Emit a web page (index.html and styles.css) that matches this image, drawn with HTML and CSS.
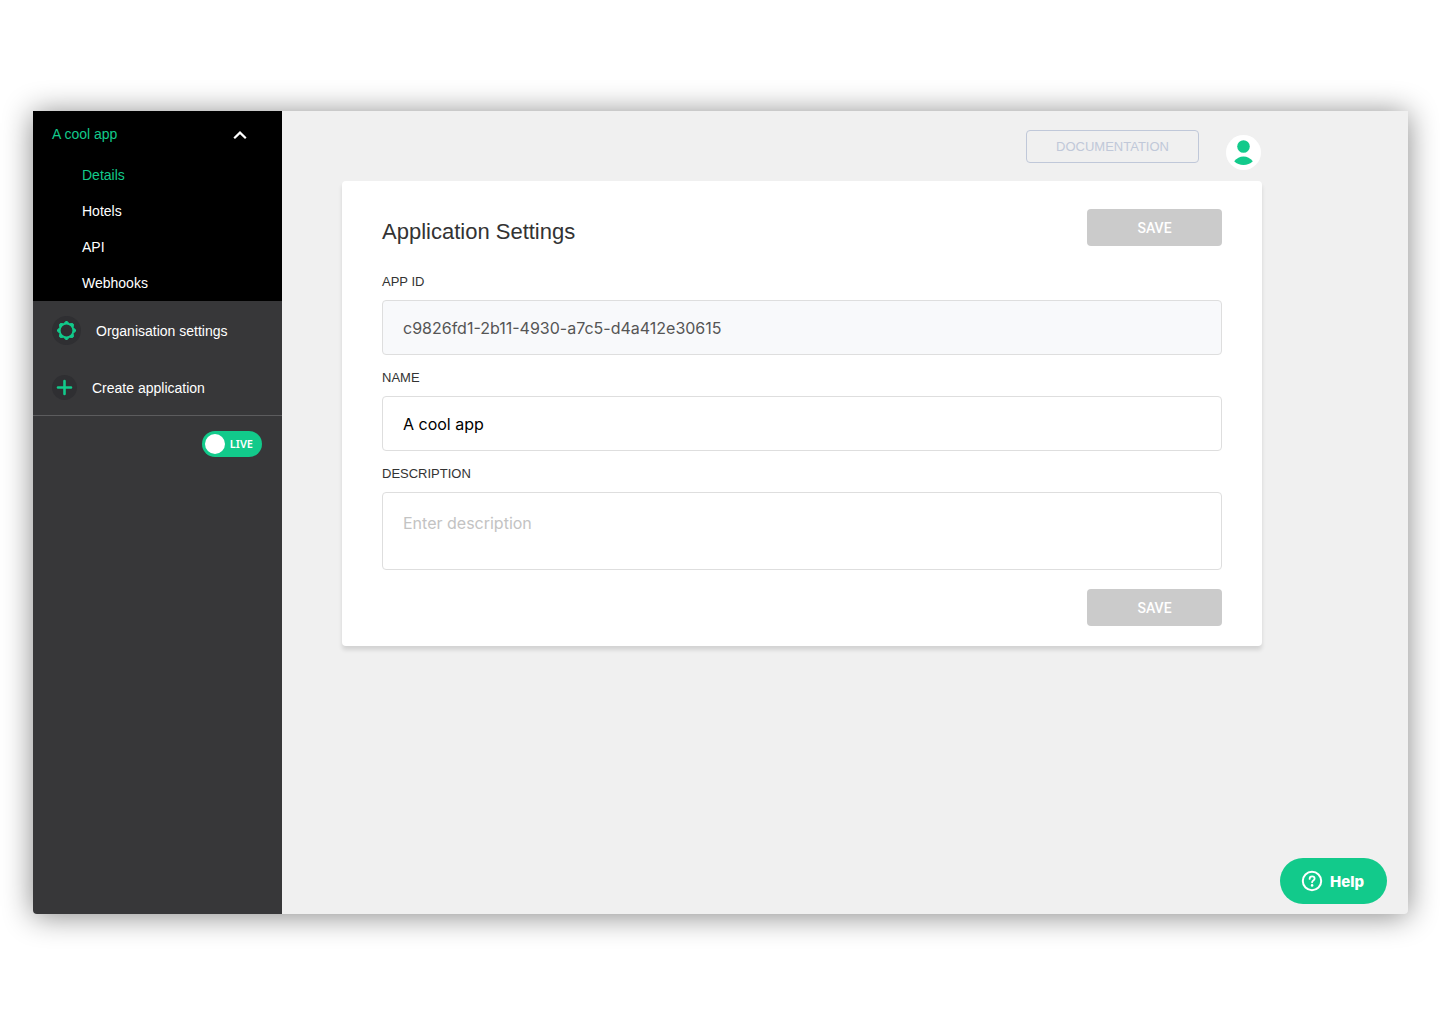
FILE: index.html
```html
<!DOCTYPE html>
<html lang="en">
<head>
    <meta charset="UTF-8">
    <meta name="viewport" content="width=device-width, initial-scale=1.0">
    <title>Application Settings</title>
    <link rel="stylesheet" href="styles.css">
</head>
<body>

<div class="window">
    <aside class="sidebar">
        <nav class="app-nav">
            <button type="button" class="app-toggle" aria-expanded="true">
                A cool app
                <svg width="14" height="12" viewBox="0 0 14 12" fill="none" stroke="#fff" stroke-width="2.2" stroke-linejoin="miter">
                    <path d="M1.2 10.2L7 4.6l5.8 5.6"/>
                </svg>
            </button>
            <a href="#details" class="active">Details</a>
            <a href="#hotels">Hotels</a>
            <a href="#api">API</a>
            <a href="#webhooks">Webhooks</a>
        </nav>
        <div class="org-nav">
            <a href="#organisation">
                <svg width="29" height="29" viewBox="0 0 29 29">
                    <circle cx="14.5" cy="14.5" r="14.5" fill="#2f2f32"/>
                    <circle cx="14.5" cy="14.5" r="6.8" fill="none" stroke="#12ca8b" stroke-width="1.8"/>
                    <g fill="#12ca8b" stroke="#12ca8b" stroke-width="1" stroke-linejoin="round">
                        <path id="tooth" d="M12.2 7.4l1.5-1.9h1.6l1.5 1.9z"/>
                        <use href="#tooth" transform="rotate(45 14.5 14.5)"/>
                        <use href="#tooth" transform="rotate(90 14.5 14.5)"/>
                        <use href="#tooth" transform="rotate(135 14.5 14.5)"/>
                        <use href="#tooth" transform="rotate(180 14.5 14.5)"/>
                        <use href="#tooth" transform="rotate(225 14.5 14.5)"/>
                        <use href="#tooth" transform="rotate(270 14.5 14.5)"/>
                        <use href="#tooth" transform="rotate(315 14.5 14.5)"/>
                    </g>
                </svg>
                Organisation settings
            </a>
            <a href="#create">
                <svg width="25" height="25" viewBox="0 0 25 25">
                    <circle cx="12.5" cy="12.5" r="12.5" fill="#2f2f32"/>
                    <path d="M12.5 6v13M6 12.5h13" stroke="#12ca8b" stroke-width="2.6" stroke-linecap="round"/>
                </svg>
                Create application
            </a>
        </div>
        <label class="live-switch">
            <input type="checkbox" checked>
            <span>LIVE</span>
        </label>
    </aside>

    <main class="main">
        <header class="topbar">
            <a href="#documentation" class="doc-btn">DOCUMENTATION</a>
            <button type="button" class="avatar" aria-label="Account">
                <svg width="35" height="35" viewBox="0 0 35 35" fill="#12ca8b">
                    <circle cx="17.5" cy="11.5" r="6.3"/>
                    <path d="M8.2 26.2Q12 21.4 17.5 21.4T26.8 26.2Q23 30 17.5 30T8.2 26.2z"/>
                </svg>
            </button>
        </header>

        <form class="card">
            <div class="card-header">
                <h1>Application Settings</h1>
                <button type="submit" class="save-btn" disabled>SAVE</button>
            </div>
            <label for="appId">APP ID</label>
            <input type="text" id="appId" value="c9826fd1-2b11-4930-a7c5-d4a412e30615" readonly>
            <label for="appName">NAME</label>
            <input type="text" id="appName" value="A cool app">
            <label for="appDescription">DESCRIPTION</label>
            <textarea id="appDescription" placeholder="Enter description"></textarea>
            <button type="submit" class="save-btn" disabled>SAVE</button>
        </form>
    </main>

    <button type="button" class="help-btn">
        <svg width="22" height="22" viewBox="0 0 22 22" fill="none" stroke="#fff" stroke-width="2" stroke-linecap="round">
            <circle cx="11" cy="11" r="9.2"/>
            <path d="M8.6 8.9c0-1.5 1-2.5 2.5-2.5s2.5 1 2.5 2.3c0 1.8-2.5 1.9-2.5 3.6" stroke-width="1.8"/>
            <circle cx="11.1" cy="15.4" r="1.3" fill="#fff" stroke="none"/>
        </svg>
        Help
    </button>
</div>

</body>
</html>
```

FILE: styles.css
```css
* {
    box-sizing: border-box;
}
body {
    font-family: "Liberation Sans", Arial, sans-serif;
    font-size: 14px;
    background-color: #fff;
    color: #333;
    margin: 0;
    padding: 111px 32px 110px 33px;
    min-height: 100vh;
    display: flex;
}
a {
    text-decoration: none;
}
button {
    font-family: inherit;
    border: none;
    padding: 0;
    cursor: pointer;
}
svg {
    display: block;
    flex-shrink: 0;
}
.window {
    position: relative;
    flex: 1;
    display: flex;
    background-color: #f0f0f0;
    border-radius: 0 0 4px 4px;
    box-shadow: 0 2px 30px rgba(0, 0, 0, 0.48);
}
.sidebar {
    width: 249px;
    background-color: #373739;
    border-radius: 0 0 0 4px;
    display: flex;
    flex-direction: column;
}
.app-nav {
    background-color: #000;
    display: flex;
    flex-direction: column;
}
.app-toggle {
    display: flex;
    justify-content: space-between;
    align-items: center;
    height: 46px;
    padding: 0 35px 0 19px;
    background: none;
    color: #12ca8b;
    font-size: 14px;
}
.app-nav a {
    line-height: 36px;
    padding-left: 49px;
    color: #fff;
}
.app-nav .active {
    color: #12ca8b;
}
.org-nav {
    border-bottom: 1px solid #5c5c5e;
}
.org-nav a {
    display: flex;
    align-items: center;
    gap: 15px;
    height: 57px;
    padding: 2px 0 0 19px;
    color: #fff;
}
.live-switch {
    align-self: flex-end;
    position: relative;
    margin: 15px 20px;
    cursor: pointer;
}
.live-switch input {
    appearance: none;
    display: block;
    width: 60px;
    height: 26px;
    margin: 0;
    border-radius: 13px;
    background-color: #12ca8b;
    cursor: pointer;
}
.live-switch input::before {
    content: "";
    display: block;
    width: 20px;
    height: 20px;
    margin: 3px;
    border-radius: 50%;
    background-color: #fff;
    position: absolute;
}
.live-switch span {
    position: absolute;
    top: 0;
    right: 9px;
    line-height: 26px;
    color: #fff;
    font-family: "Noto Sans", sans-serif;
    font-size: 11px;
    font-weight: 600;
}
.main {
    flex: 1;
    padding: 19px 60px;
}
.topbar {
    max-width: 920px;
    display: flex;
    justify-content: flex-end;
    align-items: flex-start;
    gap: 27px;
}
.doc-btn {
    width: 173px;
    border: 1px solid #c0c8d9;
    border-radius: 4px;
    line-height: 31px;
    text-align: center;
    color: #c0c8d9;
    font-size: 13px;
}
.avatar {
    margin: 5px 1px 11px 0;
    border-radius: 50%;
    background-color: #fff;
}
.card {
    max-width: 920px;
    display: flex;
    flex-direction: column;
    padding: 28px 40px 20px;
    background-color: #fff;
    border-radius: 4px;
    box-shadow: 0 4px 4px rgba(0, 0, 0, 0.12);
}
.card-header {
    display: flex;
    justify-content: space-between;
    align-items: flex-start;
    margin-bottom: 18px;
}
.card h1 {
    margin: 0;
    font-size: 22px;
    font-weight: normal;
    line-height: 46px;
}
.card label {
    font-size: 13px;
    line-height: 17px;
    margin-bottom: 10px;
}
.card input, .card textarea {
    width: 100%;
    height: 55px;
    padding: 0 20px;
    margin-bottom: 14px;
    border: 1px solid #dedede;
    border-radius: 4px;
    background-color: #fff;
    color: #000;
    font-family: Inter, sans-serif;
    font-size: 16px;
    outline: none;
}
.card input:read-only {
    background-color: #f8f9fb;
    color: #555;
}
.card textarea {
    height: 78px;
    padding: 20px;
    margin-bottom: 19px;
    resize: none;
}
.card textarea::placeholder {
    color: #c3c3c3;
}
.save-btn {
    align-self: flex-end;
    width: 135px;
    height: 37px;
    border-radius: 4px;
    background-color: #cbcbcb;
    color: #fff;
    font-family: Roboto, sans-serif;
    font-size: 14px;
    font-weight: 500;
}
.card-header .save-btn {
    align-self: flex-start;
}
.help-btn {
    position: absolute;
    right: 21px;
    bottom: 10px;
    display: flex;
    align-items: center;
    justify-content: center;
    gap: 7px;
    width: 107px;
    height: 46px;
    padding-right: 2px;
    border-radius: 23px;
    background-color: #12ca8b;
    color: #fff;
    font-family: Inter, sans-serif;
    font-size: 15px;
    font-weight: 800;
}
```
